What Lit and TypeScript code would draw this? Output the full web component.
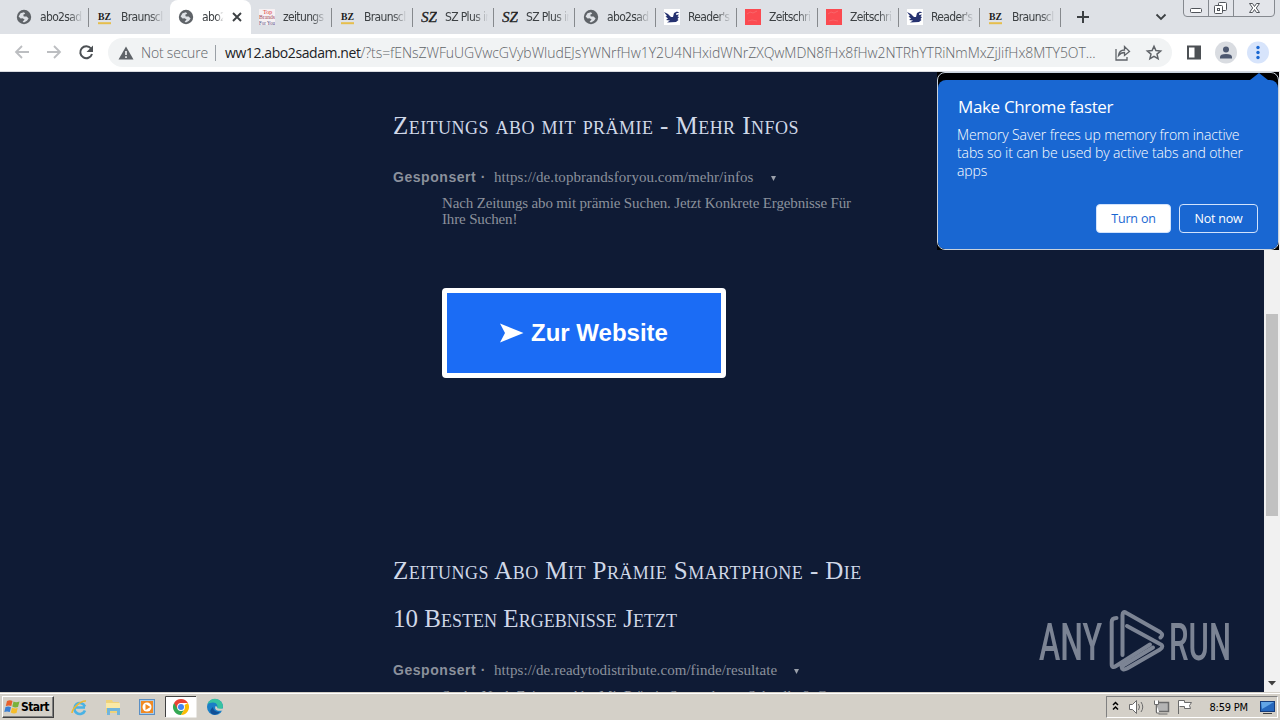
import { LitElement, css, html, svg } from 'lit';
import { customElement, property } from 'lit/decorators.js';

const globe = svg`<circle cx="8" cy="8" r="7.2" fill="#5f6368"/><path d="M2.600 7.600L4.500 4.200L8 3.200L9.200 4.800L7.200 5.800L7.800 7.400L10.600 7.400L12.600 9.600L11 11.800L8 13.400L6.600 12.800L8.600 10.600L6.600 9.200L4.600 9.400Z" fill="#dee1e6"/>`;
const bz = svg`<text x="1" y="11" textLength="13" lengthAdjust="spacingAndGlyphs" font-family="Liberation Serif" font-size="11" font-weight="700" fill="#1c1c1c">BZ</text><path d="M1 14.200h13" stroke="#e6be4c" stroke-width="2"/>`;
const sz = svg`<text x="0" y="13" textLength="16" lengthAdjust="spacingAndGlyphs" font-family="Liberation Serif" font-size="15" font-style="italic" fill="#222" stroke="#222" stroke-width="0.300">SZ</text>`;
const red = svg`<rect width="16" height="16" fill="#fb4a50"/><path d="M2 5l3-2 3 1 4-2M3 12l4-1 5 1" stroke="#f9666a" fill="none"/>`;
const bird = svg`<rect width="16" height="16" fill="#fff"/><path d="M0 3L4 5L7 8L9 8L10 4L13 2.500L15.500 4H12.500L12 6L15 5.500L13.500 7.500L15 8L13.500 10L14.500 11L12 13L3 13.500L6 11.500L2 11L4 9.500L1.500 7.500L3 7Z" fill="#263270"/>`;
const brands = svg`<rect width="16" height="16" fill="#f6f1f3"/><g font-family="Liberation Serif" font-size="6"><text x="4" y="5" fill="#d33">Top</text><text x="0" y="10" textLength="16" lengthAdjust="spacingAndGlyphs" fill="#a34a58">Brands</text><text x="0" y="15.500" textLength="16" lengthAdjust="spacingAndGlyphs" fill="#554a80">For You</text></g>`;

const tabs = [
  { icon: globe, title: 'abo2sad' },
  { icon: bz, title: 'Braunscl' },
  { icon: globe, title: 'abo2', active: true },
  { icon: brands, title: 'zeitungs' },
  { icon: bz, title: 'Braunscl' },
  { icon: sz, title: 'SZ Plus in' },
  { icon: sz, title: 'SZ Plus in' },
  { icon: globe, title: 'abo2sad' },
  { icon: bird, title: "Reader's" },
  { icon: red, title: 'Zeitschri' },
  { icon: red, title: 'Zeitschri' },
  { icon: bird, title: "Reader's" },
  { icon: bz, title: 'Braunscl' },
];

@customElement('tab-strip')
export class TabStrip extends LitElement {
  static get styles() {
    return css`
    :host {
      display: flex;
      height: 34px;
      padding-left: 8px;
      box-sizing: border-box;
      background: #dee1e6;
      font: 12px "DejaVu Sans Condensed", "DejaVu Sans", sans-serif;
      font-stretch: condensed;
      color: #3c4043;
    }

    .tab {
      display: flex;
      align-items: center;
      width: 81px;
      height: 34px;
      padding: 0 0 0 8px;
      box-sizing: border-box;
      gap: 8px;
      background: linear-gradient(#86898d, #86898d) right 0 top 8px / 1px 19px no-repeat;
    }

    .tab svg {
      flex: none;
    }

    .tab.active {
      background: #fff;
      border-radius: 8px 8px 0 0;
    }

    .tab.before {
      background: none;
    }

    .title {
      width: 44px;
      white-space: nowrap;
      letter-spacing: -0.65px;
      -webkit-mask-image: linear-gradient(90deg, #000 65%, transparent 98%);
    }

    .active .title {
      width: 22px;
    }

    .plus {
      margin: 9px 0 0 15px;
    }

    .chevron {
      margin: 12px 0 0 65px;
    }

    .win {
      margin: -1px 0 0 auto;
      padding-right: 4px;
    }
    `;
  }

  render() {
    return html`
      ${tabs.map((t, i) => html`
        <div class="tab ${t.active ? 'active' : ''} ${tabs[i + 1]?.active ? 'before' : ''}">
          <svg width="16" height="16">${t.icon}</svg>
          <span class="title">${t.title}</span>
          ${t.active ? html`<svg width="10" height="10"><path d="M1 1l8 8M9 1L1 9" stroke="#3c4043" stroke-width="1.9"/></svg>` : ''}
        </div>`)}
      <svg class="plus" width="14" height="16"><path d="M7 2v12M1 8h12" stroke="#3c4043" stroke-width="2"/></svg>
      <svg class="chevron" width="12" height="10"><path d="M1.500 2.500L6 7l4.500-4.500" fill="none" stroke="#3c4043" stroke-width="1.8"/></svg>
      <svg class="win" width="94" height="19">
        <path d="M1.500 0V14Q1.500 17.500 5 17.500H89Q92.500 17.500 92.500 14V0M26.500 0V17M51.500 0V17" fill="#e3e5ea" stroke="#85898f"/>
        <rect x="8.500" y="9.500" width="11" height="4" rx="1" fill="#fff" stroke="#50545a"/>
        <rect x="36.500" y="3.500" width="8" height="8" rx="1" fill="#fff" stroke="#50545a"/>
        <rect x="32.500" y="6.500" width="8" height="8" rx="1" fill="#fff" stroke="#50545a"/>
        <rect x="35.500" y="9.500" width="2" height="2" fill="#fff" stroke="#50545a"/>
        <path d="M67.500 4.500h3l2 3 2-3h3l-3.200 4.500 3.200 4.500h-3l-2-3-2 3h-3l3.200-4.500z" fill="#fff" stroke="#50545a"/>
      </svg>
    `;
  }
}

@customElement('tool-bar')
export class ToolBar extends LitElement {
  static get styles() {
    return css`
    :host {
      display: flex;
      align-items: center;
      height: 38px;
      box-sizing: border-box;
      background: #fff;
      border-bottom: 1px solid #d8dbdf;
      font: 300 14px "Open Sans", "Noto Sans", sans-serif;
      color: #5f6368;
    }

    .nav {
      flex: none;
      width: 108px;
      height: 37px;
    }

    .omnibox {
      display: flex;
      align-items: center;
      width: 1064px;
      height: 29px;
      border-radius: 15px;
      background: #f1f3f4;
      white-space: nowrap;
    }

    .warn {
      margin: 0 7px 0 10px;
    }

    .secure {
      width: 66px;
      letter-spacing: -0.2px;
    }

    .bar {
      width: 1px;
      height: 16px;
      margin: 0 9px 0 8px;
      background: #9aa0a6;
    }

    .url {
      width: 871px;
      letter-spacing: -0.05px;
    }

    .url b {
      font-weight: 400;
      letter-spacing: -0.42px;
      color: #202124;
    }

    .actions {
      margin-left: 18px;
    }

    .right {
      margin-left: 8px;
    }
    `;
  }

  render() {
    return html`
      <svg class="nav" viewBox="0 0 108 37">
        <g fill="none" stroke="#bcbec1" stroke-width="1.8">
          <path d="M29 18H16.500M22 12l-6 6 6 6M47 18H59.500M54 12l6 6-6 6"/>
          <path d="M91 14.500A6 6 0 1 0 92 20" stroke="#4c5054" stroke-width="2"/>
        </g>
        <path d="M93 11.500v6.500h-6.500z" fill="#4c5054"/>
      </svg>
      <div class="omnibox">
        <svg class="warn" width="16" height="14"><path d="M8 0.500L15.500 13.500H0.500Z" fill="#5f6368"/><path d="M8 5v4M8 10.300v1.700" stroke="#fff" stroke-width="1.500"/></svg>
        <span class="secure">Not secure</span>
        <span class="bar"></span>
        <span class="url"><b>ww12.abo2sadam.net</b>/?ts=fENsZWFuUGVwcGVybWludEJsYWNrfHw1Y2U4NHxidWNrZXQwMDN8fHx8fHw2NTRhYTRiNmMxZjJifHx8MTY5OT...</span>
        <svg class="actions" width="50" height="18" fill="none" stroke="#5f6368" stroke-width="1.300">
          <path d="M2 5v11h11v-3M4.500 11.500C5 7.500 7.500 6 10.500 6V2.500L15.500 7.500L10.500 11.500V8.500C8 8.500 6 9.500 4.500 11.500Z"/>
          <path d="M40 2.300l1.900 4.300 4.700.4-3.600 3.100 1.100 4.600-4.100-2.400-4.100 2.400 1.100-4.600-3.600-3.100 4.700-.4z" stroke-width="1.500"/>
        </svg>
      </div>
      <svg class="right" width="100" height="30">
        <rect x="8" y="8.500" width="12" height="12" fill="none" stroke="#4c5054" stroke-width="2"/><path d="M14.500 8h6v13h-6z" fill="#4c5054"/>
        <circle cx="46" cy="14.500" r="11" fill="#d9dce1"/>
        <circle cx="46" cy="11.500" r="3" fill="#4d5870"/><path d="M40 20.500v-1.500q0-3 6-3t6 3v1.500z" fill="#4d5870"/>
        <circle cx="78" cy="14.500" r="11" fill="#d7e4fb"/>
        <g fill="#1967d2"><circle cx="78" cy="9.500" r="1.700"/><circle cx="78" cy="14.500" r="1.700"/><circle cx="78" cy="19.500" r="1.700"/></g>
      </svg>
    `;
  }
}

@customElement('memory-bubble')
export class MemoryBubble extends LitElement {
  static get styles() {
    return css`
    :host {
      display: block;
      width: 342px;
      height: 178px;
      background: #000;
      font: 300 14px/18px "Open Sans", "Noto Sans", sans-serif;
      color: #fff;
    }

    .frame {
      display: flex;
      flex-direction: column;
      height: 178px;
      box-sizing: border-box;
      border: 1px solid #c9d2dc;
      border-radius: 8px;
      overflow: hidden;
    }

    .tip {
      display: block;
      flex: none;
      margin-left: auto;
      margin-right: 10px;
    }

    .body {
      flex: 1;
      padding: 17px 20px 0 19px;
      border-radius: 8px 8px 0 0;
      background: #1967d2;
    }

    h3 {
      margin: 0 0 9px 1px;
      font: 500 17px/20px "Open Sans", sans-serif;
      letter-spacing: -0.35px;
    }

    p {
      margin: 0;
      height: 54px;
      white-space: nowrap;
      letter-spacing: -0.11px;
    }

    .buttons {
      display: flex;
      justify-content: flex-end;
      gap: 8px;
      margin-top: 24px;
    }

    button {
      width: 79px;
      height: 29px;
      padding: 0;
      border: 1px solid #d2e3fc;
      border-radius: 4px;
      background: none;
      font: 400 12.500px "Open Sans", sans-serif;
      letter-spacing: -0.2px;
      color: #fff;
    }

    .primary {
      width: 75px;
      background: #fff;
      color: #1967d2;
    }
    `;
  }

  render() {
    return html`
      <div class="frame">
        <svg class="tip" width="18" height="7"><path d="M0 7L9 0L18 7Z" fill="#1967d2"/></svg>
        <div class="body">
          <h3>Make Chrome faster</h3>
          <p>Memory Saver frees up memory from inactive<br>tabs so it can be used by active tabs and other<br>apps</p>
          <div class="buttons">
            <button class="primary">Turn on</button>
            <button>Not now</button>
          </div>
        </div>
      </div>
    `;
  }
}

@customElement('ad-result')
export class AdResult extends LitElement {
  @property() url = '';

  static get styles() {
    return css`
    :host {
      display: block;
      font: 15px/16px "Liberation Serif", serif;
      color: #8b919c;
    }

    .title {
      font-size: 25px;
      line-height: 48px;
      font-variant: small-caps;
      letter-spacing: 0.45px;
      white-space: nowrap;
      color: #d0d8e8;
    }

    .source {
      display: flex;
      align-items: center;
      height: 20px;
      margin-top: 17px;
      letter-spacing: 0.05px;
    }

    .source b {
      width: 101px;
      font: 700 14px "Liberation Sans", sans-serif;
      letter-spacing: 0.55px;
    }

    .arrow {
      margin: 3px 0 0 17px;
    }

    .text {
      margin: 8px 0 0 49px;
      white-space: nowrap;
      letter-spacing: -0.15px;
    }
    `;
  }

  render() {
    return html`
      <div class="title"><slot name="title"></slot></div>
      <div class="source">
        <b>Gesponsert ·</b>
        <span>${this.url}</span>
        <svg class="arrow" width="5" height="5"><path d="M0 0h5L2.500 5z" fill="#9aa0aa"/></svg>
      </div>
      <div class="text"><slot></slot></div>
    `;
  }
}

@customElement('task-bar')
export class TaskBar extends LitElement {
  static get styles() {
    return css`
    :host {
      display: flex;
      align-items: center;
      height: 28px;
      box-sizing: border-box;
      padding-top: 2px;
      background: linear-gradient(#fff, #fff) 0 1px / 100% 1px no-repeat #d4d0c8;
      font: 11px "DejaVu Sans Condensed", "DejaVu Sans", sans-serif;
      font-stretch: condensed;
      color: #000;
    }

    .start {
      display: flex;
      align-items: center;
      gap: 1px;
      width: 52px;
      height: 22px;
      margin-left: 2px;
      box-sizing: border-box;
      padding-left: 1px;
      border: 1px solid;
      border-color: #fff #404040 #404040 #fff;
      box-shadow: inset -1px -1px #808080;
      font-size: 12px;
      font-weight: 700;
      letter-spacing: -0.6px;
    }

    .apps {
      margin-left: 10px;
    }

    .tray {
      display: flex;
      align-items: center;
      width: 172px;
      height: 22px;
      margin: 0 2px 0 auto;
      box-sizing: border-box;
      border: 1px solid;
      border-color: #808080 #fff #fff #808080;
    }

    .clock {
      width: 41px;
      margin: 0 9px 0 16px;
      white-space: nowrap;
      letter-spacing: -0.2px;
    }
    `;
  }

  render() {
    return html`
      <div class="start">
        <svg width="16" height="16">
          <path d="M3 2Q6 0.500 8.500 2L7.300 7Q5 5.800 1.800 7Z" fill="#e8602c"/>
          <path d="M9.500 2.500Q12 4 15.500 2.500L14 8Q11 9 8.300 7.500Z" fill="#7ab23c"/>
          <path d="M1.500 8Q4.500 7 7 8.200L5.800 13Q3 12 0.300 13Z" fill="#3a7fd4"/>
          <path d="M8 8.700Q11 10 13.700 9L12.500 14Q9.500 15 6.800 13.500Z" fill="#f6bd2b"/>
        </svg>
        <span>Start</span>
      </div>
      <svg class="apps" width="170" height="24">
        <g fill="none" stroke="#4ab2e4" stroke-width="2.600"><path d="M21 15.500A5.500 5.500 0 1 1 21 11.500M11 12.500H21"/></g>
        <path d="M8 18C8 14 16 5.500 22 6" fill="none" stroke="#edb932" stroke-width="1.600"/>
        <path d="M42 5h6l1 2h6v11H42z" fill="#efd27a"/><path d="M42 8h14v5H42z" fill="#fae9a6"/><path d="M43 13h13v7h-3v-4h-7v4h-3z" fill="#72b5dc"/>
        <rect x="75.500" y="4.500" width="15" height="15" fill="#a9cbe9" stroke="#5a8fc4"/><rect x="77" y="6" width="12" height="12" fill="#f08a24"/><circle cx="83" cy="12" r="4.500" fill="#fff"/><path d="M81.500 9l5 3-5 3z" fill="#f08a24"/>
        <rect x="101.500" y="1.500" width="31" height="21" fill="#fff"/><path d="M101.500 22V1.500H132" fill="none" stroke="#404040"/>
        <path d="M117 12L110.070 8A8 8 0 0 0 117 20L120.500 14Z" fill="#34a853"/>
        <path d="M117 12L123.930 8A8 8 0 0 1 117 20L120.500 14Z" fill="#fbbc05"/>
        <path d="M110.070 8A8 8 0 0 1 123.930 8H117L113.500 14Z" fill="#ea4335"/>
        <circle cx="117" cy="12" r="3.900" fill="#fff"/><circle cx="117" cy="12" r="3" fill="#4285f4"/>
        <circle cx="151" cy="12" r="8" fill="#1b7fc6"/><path d="M143.500 9A8 8 0 0 1 159 12C158 15 154 15 153 14Q155 8 149 7.500Q145 7.500 143.500 9Z" fill="#37c3a1"/>
        <path d="M149 12Q149 17 156 17Q152 21 148 19Q144 16 149 12Z" fill="#124f96"/>
        <path d="M152.500 11.500Q150.500 15.500 159 14.500" fill="none" stroke="#d4d0c8" stroke-width="2"/>
      </svg>
      <div class="tray">
        <svg width="87" height="20">
          <path d="M6 8l2.500-2.500L11 8M6 12.500L8.500 10l2.500 2.500" fill="none" stroke="#000" stroke-width="1.500"/>
          <g fill="#fff" stroke="#6b6b6b">
            <path d="M22.500 7.500h3l4-4v13l-4-4h-3z"/>
            <path d="M31.500 7q2 3 0 6M34 5q3.500 5 0 10" fill="none"/>
            <rect x="49.500" y="5.500" width="12" height="9" fill="#b4b4b4" stroke-width="1.500"/><path d="M51.500 17h9M47.500 3.500v4h4v-4M49.500 8v8h3"/>
            <path d="M71.500 17V3.500h6v2h7l-2 3 1 3h-6v-2h-5"/>
          </g>
        </svg>
        <span class="clock">8:59 PM</span>
        <svg width="18" height="16"><rect x="1.500" y="2.500" width="14" height="10" fill="#2668bd" stroke="#153c7b"/><path d="M2 3h13L3 10z" fill="#62a5e6"/><path d="M4 14.500h9" stroke="#404040"/></svg>
      </div>
    `;
  }
}

@customElement('app-root')
export class AppRoot extends LitElement {
  static get styles() {
    return css`
    :host {
      display: flex;
      flex-direction: column;
      position: relative;
      width: 1280px;
      height: 720px;
      overflow: hidden;
    }

    .view {
      display: flex;
      height: 620px;
      overflow: hidden;
    }

    .page {
      width: 1264px;
      padding: 31px 0 0 393px;
      box-sizing: border-box;
      overflow: hidden;
      background: #0f1b35;
    }

    .first {
      margin-top: -1px;
    }

    .tight {
      letter-spacing: 0.02px;
    }

    .visit {
      display: flex;
      align-items: center;
      justify-content: center;
      gap: 7px;
      width: 284px;
      height: 90px;
      margin: 61px 0 169px 49px;
      box-sizing: border-box;
      border: 5px solid #fff;
      border-radius: 4px;
      background: #1b6cf5;
      font: 700 24px "Liberation Sans", sans-serif;
      color: #fff;
    }

    .scroll {
      display: flex;
      flex-direction: column;
      align-items: center;
      width: 16px;
      box-sizing: border-box;
      padding-top: 242px;
      background: #f1f1f1;
    }

    .thumb {
      width: 12px;
      height: 202px;
      margin-bottom: 165px;
      background: #c1c1c1;
    }

    memory-bubble {
      position: absolute;
      left: 937px;
      top: 72px;
    }

    .anyrun {
      position: absolute;
      left: 1036px;
      top: 606px;
    }
    `;
  }

  render() {
    return html`
      <tab-strip></tab-strip>
      <tool-bar></tool-bar>
      <div class="view">
        <div class="page">
          <ad-result class="first" url="https://de.topbrandsforyou.com/mehr/infos">
            <span slot="title">Zeitungs abo mit prämie - Mehr Infos</span>
            Nach Zeitungs abo mit prämie Suchen. Jetzt Konkrete Ergebnisse Für<br>Ihre Suchen!
          </ad-result>
          <div class="visit">
            <svg width="24" height="20"><path d="M0 0.500L23.500 10L0 19.500L5 10Z" fill="#fff"/></svg>
            Zur Website
          </div>
          <ad-result url="https://de.readytodistribute.com/finde/resultate">
            <span slot="title">Zeitungs Abo Mit Prämie Smartphone - Die<br><span class="tight">10 Besten Ergebnisse Jetzt</span></span>
            Suche Nach Zeitungs Abo Mit Prämie Smartphone. Schnelle &amp; G
          </ad-result>
        </div>
        <div class="scroll">
          <div class="thumb"></div>
          <svg width="8" height="5"><path d="M0 0h8L4 4.500z" fill="#404040"/></svg>
        </div>
      </div>
      <task-bar></task-bar>
      <memory-bubble></memory-bubble>
      <svg class="anyrun" width="200" height="70" opacity="0.55">
        <g font-family="Roboto" font-size="52" font-weight="500" fill="#d6dae2">
          <text x="3" y="53.500" textLength="63" lengthAdjust="spacingAndGlyphs">ANY</text>
          <text x="133" y="53.500" textLength="62" lengthAdjust="spacingAndGlyphs">RUN</text>
        </g>
        <g fill="none" stroke="#d6dae2" stroke-width="4" stroke-linejoin="round" stroke-linecap="round">
          <path d="M80.500 12Q75.700 12 75.700 16V58Q75.700 63 80 60L114 38.500"/>
          <path d="M86.500 49V9Q86.500 4.500 90.500 7L124 26Q128 29 124.500 31.500"/>
          <path d="M91 20L124 38Q128.500 40 124 43.500L91 62.500Q86 65 85.500 60.500L117 41.500"/>
        </g>
      </svg>
    `;
  }
}
